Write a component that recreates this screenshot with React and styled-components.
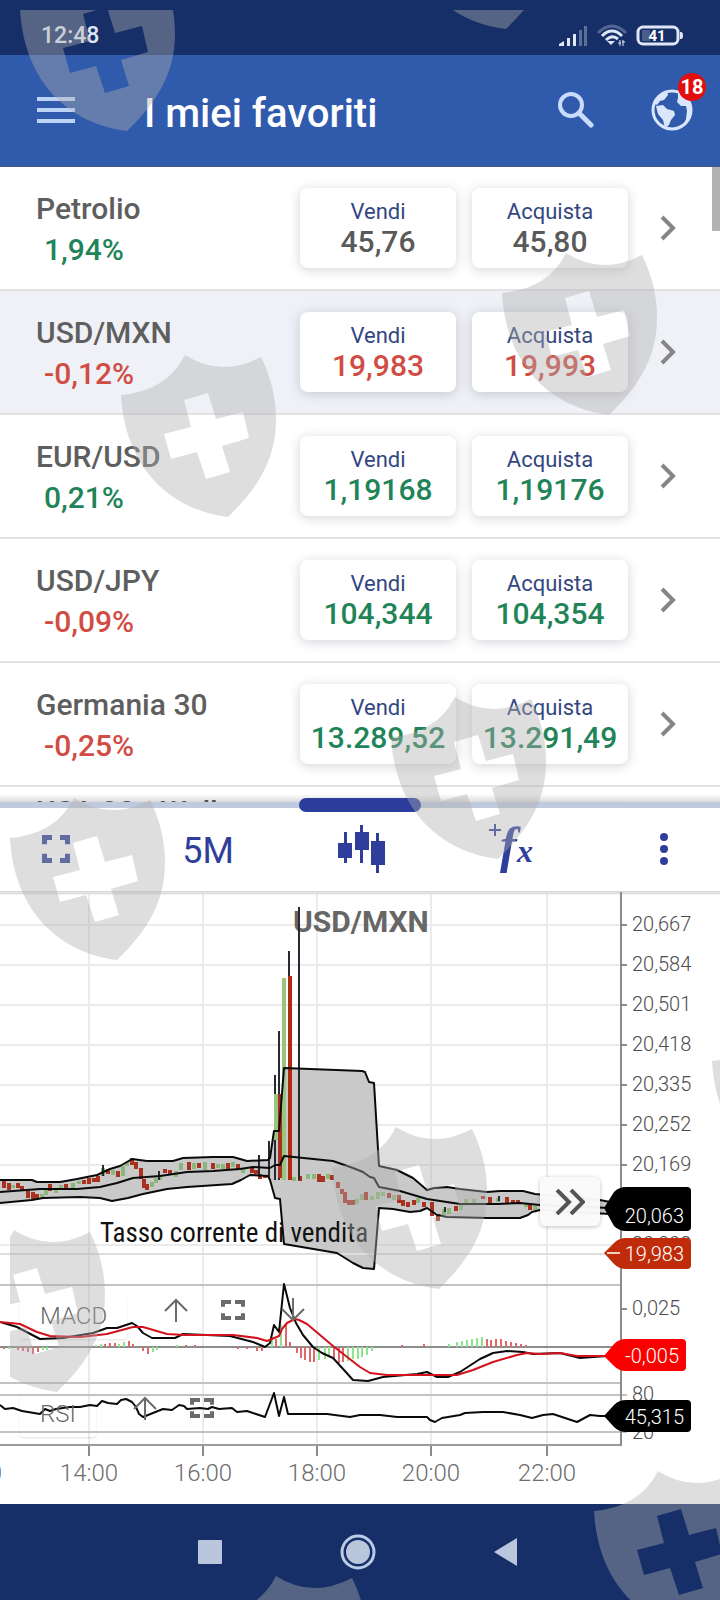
import styled, { createGlobalStyle } from "styled-components";

const GlobalStyle = createGlobalStyle`
  * {
    box-sizing: border-box;
  }

  body {
    margin: 0;
    background-color: #fff;
    font-family: Roboto, "Liberation Sans", sans-serif;
  }

  button {
    font-family: inherit;
    border: none;
    padding: 0;
    background: none;
    cursor: pointer;
  }

  svg {
    display: block;
  }
`

const quotes = [
  { name: "Petrolio", change: "1,94%", up: true, sell: "45,76", buy: "45,80", tone: "flat" },
  { name: "USD/MXN", change: "-0,12%", up: false, sell: "19,983", buy: "19,993", tone: "down", selected: true },
  { name: "EUR/USD", change: "0,21%", up: true, sell: "1,19168", buy: "1,19176", tone: "up" },
  { name: "USD/JPY", change: "-0,09%", up: false, sell: "104,344", buy: "104,354", tone: "up" },
  { name: "Germania 30", change: "-0,25%", up: false, sell: "13.289,52", buy: "13.291,49", tone: "up" },
  { name: "USA 30 - Wall Street", change: "", up: true, sell: "", buy: "", tone: "flat" },
];

const tones = {
  flat: "#5a5a5a",
  up: "#1f8458",
  down: "#d04c44",
};

const Page = styled.div`
  position: relative;
  min-height: 100vh;
  display: flex;
  flex-direction: column;
  overflow: hidden;
`

const StatusBar = styled.div`
  display: flex;
  align-items: center;
  height: 55px;
  padding: 16px 37px 0 41px;
  background-color: #172f68;
  color: #dfe6f6;

  time {
    flex: 1;
    font-size: 23px;
    font-weight: 500;
    line-height: 24px;
  }
`

const StatusIcons = styled.div`
  display: flex;
  align-items: center;
  gap: 9px;
`

const Header = styled.header`
  display: flex;
  align-items: center;
  height: 112px;
  padding: 0 27px 0 37px;
  background-color: #305bac;
  border-bottom: 2px solid #3a5a94;

  h1 {
    flex: 1;
    margin: 0 0 0 68px;
    padding-top: 8px;
    color: #fff;
    font-size: 40px;
    font-weight: 500;
    line-height: 44px;
  }
`

const HeaderButton = styled.button`
  position: relative;
  color: #cfdffa;
  margin-left: ${(props) => props.$gap || 0}px;
`

const Badge = styled.span`
  position: absolute;
  top: -16px;
  right: -13px;
  width: 28px;
  height: 28px;
  border-radius: 50%;
  background-color: #e20d0d;
  color: #fff;
  font-size: 20px;
  font-weight: 700;
  line-height: 29px;
  text-align: center;
`

const List = styled.main`
  position: relative;
  height: 635px;
  overflow: hidden;

  &::after {
    content: "";
    position: absolute;
    left: 0;
    right: 0;
    bottom: 0;
    height: 8px;
    background: linear-gradient(rgba(0, 0, 0, 0), rgba(0, 0, 0, 0.14));
  }
`

const ScrollThumb = styled.div`
  position: absolute;
  top: 0;
  right: 0;
  width: 8px;
  height: 64px;
  background-color: #b3b3b3;
`

const Row = styled.div`
  display: flex;
  align-items: center;
  gap: 16px;
  height: 124px;
  padding: 0 44px 0 36px;
  border-bottom: 2px solid #e2e2e4;
  background-color: ${(props) => (props.$selected ? "#eff1f7" : "#fff")};
`

const Instrument = styled.div`
  flex: 1;
  max-width: 248px;
  margin-right: auto;
  padding-top: 2px;
`

const Name = styled.h2`
  width: 200px;
  margin: 0;
  color: #5e5e5e;
  font-size: 30px;
  font-weight: 500;
  line-height: 41px;
`

const Change = styled.p`
  margin: 0 0 0 8px;
  min-height: 34px;
  color: ${(props) => (props.$up ? "#1f8458" : "#d04c44")};
  font-size: 30px;
  font-weight: 500;
  line-height: 41px;
`

const PriceButton = styled.button`
  display: flex;
  flex-direction: column;
  align-items: center;
  justify-content: center;
  width: 156px;
  height: 80px;
  padding-top: 2px;
  border-radius: 8px;
  background-color: #fff;
  box-shadow: 0 2px 12px rgba(60, 50, 80, 0.22);
  color: #34467f;
  font-size: 22px;
  line-height: 26px;

  strong {
    color: ${(props) => tones[props.$tone]};
    font-size: 30px;
    font-weight: 500;
    line-height: 34px;
  }
`

const DetailsButton = styled.button`
  width: 16px;
  margin-left: 16px;
`

const Divider = styled.div`
  position: relative;
  height: 6px;
  background-color: #bfcadf;
`

const Handle = styled.div`
  position: absolute;
  top: -4px;
  left: 50%;
  width: 122px;
  height: 14px;
  margin-left: -61px;
  border-radius: 7px;
  background-color: #2d3d9c;
`

const Toolbar = styled.div`
  display: flex;
  align-items: center;
  justify-content: space-between;
  height: 84px;
  padding: 0 26px 2px 26px;
  border-bottom: 1px solid #dadada;
  color: #2f3d9b;
`

const ToolButton = styled.button`
  display: flex;
  align-items: center;
  justify-content: center;
  width: 60px;
  color: inherit;
`

const PeriodButton = styled(ToolButton)`
  padding-top: 4px;
  font-size: 36px;
  line-height: 40px;
`

const ChartArea = styled.section`
  position: relative;
  flex: 1;

  & > svg {
    width: 100%;
    height: auto;
  }
`

const OverlayButton = styled.button`
  position: absolute;
  top: ${(props) => props.$top}px;
  left: ${(props) => props.$left}px;
  color: #6b6b6b;
`

const NextButton = styled(OverlayButton)`
  display: flex;
  align-items: center;
  justify-content: center;
  width: 60px;
  height: 49px;
  border-radius: 6px;
  background-color: rgba(250, 250, 250, 0.97);
  box-shadow: 0 1px 4px rgba(0, 0, 0, 0.25);
  color: #555;
`

const IndicatorLabel = styled.div`
  position: absolute;
  top: ${(props) => props.$top}px;
  left: 20px;
  height: 42px;
  padding: 0 20px;
  border-radius: 3px;
  box-shadow: 0 1px 2px rgba(0, 0, 0, 0.12);
  color: #6a6a6a;
  font-size: 24px;
  font-weight: 300;
  line-height: 38px;
`

const NavBar = styled.nav`
  display: flex;
  align-items: center;
  justify-content: space-between;
  height: 96px;
  padding: 0 202px 0 198px;
  background-color: #172f68;
`

const ShieldLayer = styled.div`
  position: absolute;
  inset: 10px 0 0 10px;
  overflow: hidden;
  pointer-events: none;

  svg {
    width: 100%;
    height: 100%;
  }
`

const shields = [
  [10, -41], [389, -143], [111, 345], [492, 243], [381, 687], [0, 788],
  [322, 1117], [-60, 1220], [702, 1011], [584, 1461], [202, 1566],
];

function Shields() {
  return (
    <ShieldLayer aria-hidden="true">
      <svg>
        {shields.map(([x, y]) => (
          <path
            key={`${x}-${y}`}
            transform={`translate(${x} ${y})`}
            fill="rgb(175,175,175)"
            fillOpacity="0.41"
            fillRule="evenodd"
            d="M64 0Q100 23 140 2Q155 32 155 65C155 105 136 134 107 162C50 155 4 114 0 40Q46 36 64 0ZM63 45L87 38L95 64L122 57L128 83L101 91L109 117L85 124L76 97L50 104L43 79L70 72Z"
          />
        ))}
      </svg>
    </ShieldLayer>
  )
}

function CornersIcon({ width = 28, height = 28, stroke = 5 }) {
  const s = stroke / 2;
  const r = width - s;
  const b = height - s;
  const l = 10;
  const h = height / 3;

  return (
    <svg width={width} height={height} fill="none" stroke="currentColor" strokeWidth={stroke}>
      <path d={`M${l} ${s}H${s}V${h}M${width - l} ${s}H${r}V${h}M${l} ${b}H${s}V${height - h}M${width - l} ${b}H${r}V${height - h}`} />
    </svg>
  )
}

function ArrowIcon({ down }) {
  return (
    <svg width="24" height="24" fill="none" stroke="currentColor" strokeWidth="2">
      <path d={down ? "M12 0V22M1 11L12 22L23 11" : "M12 24V2M1 13L12 2L23 13"} />
    </svg>
  )
}

function Quote({ quote }) {
  return (
    <Row $selected={quote.selected}>
      <Instrument>
        <Name>{quote.name}</Name>
        <Change $up={quote.up}>{quote.change}</Change>
      </Instrument>
      <PriceButton $tone={quote.tone}>
        Vendi
        <strong>{quote.sell}</strong>
      </PriceButton>
      <PriceButton $tone={quote.tone}>
        Acquista
        <strong>{quote.buy}</strong>
      </PriceButton>
      <DetailsButton aria-label="Dettagli">
        <svg width="16" height="26" fill="none" stroke="#858585" strokeWidth="4">
          <path d="M2 2L13 13L2 24" />
        </svg>
      </DetailsButton>
    </Row>
  )
}

const upper = "0,1180 32,1180 37,1182 60,1182 77,1179 97,1175 110,1169 120,1166 132,1159 147,1161 173,1161 183,1158 213,1157 233,1157 247,1161 268,1160 270,1158 274,1131 279,1131 284,1068 362,1071 365,1072 369,1082 374,1083 379,1166 397,1170 413,1178 427,1190 434,1188 447,1187 460,1189 487,1192 500,1191 523,1191 535,1194 600,1200 610,1202";
const middle = "0,1192 40,1189 77,1189 100,1187 117,1183 133,1178 160,1176 187,1172 213,1171 240,1169 253,1167 270,1168 275,1165 280,1165 284,1156 333,1161 353,1168 363,1172 370,1177 374,1178 379,1187 400,1191 427,1199 460,1204 497,1204 520,1203 540,1205 610,1208";
const lower = "0,1203 32,1200 43,1198 80,1197 100,1198 112,1201 128,1198 143,1194 167,1189 187,1187 232,1184 241,1180 250,1175 268,1176 270,1180 275,1198 280,1199 284,1244 337,1253 353,1263 363,1268 374,1269 379,1208 393,1209 410,1212 420,1211 427,1208 437,1215 447,1217 487,1218 520,1218 528,1215 532,1212 540,1210 610,1214";
const band = `${upper} ${lower.split(" ").reverse().join(" ")}`;

const macd = "0,1322 17,1327 40,1339 63,1338 93,1333 107,1328 117,1328 132,1323 137,1326 143,1333 152,1338 175,1338 183,1334 230,1336 253,1342 265,1347 270,1343 274,1325 279,1332 284,1284 290,1308 296,1323 303,1335 313,1347 322,1353 333,1358 344,1370 353,1380 368,1381 383,1377 417,1374 427,1372 437,1377 448,1377 460,1372 480,1359 493,1353 507,1351 523,1352 533,1354 560,1353 580,1358 607,1356";
const signal = "0,1322 20,1324 37,1332 50,1336 80,1337 107,1334 133,1327 143,1327 167,1334 185,1335 233,1335 257,1338 267,1341 279,1336 282,1329 287,1323 295,1319 299,1320 307,1324 333,1346 360,1367 370,1373 387,1375 457,1375 473,1370 493,1362 517,1355 527,1353 540,1354 560,1353 577,1356 607,1356";
const rsi = "0,1405 5,1409 13,1408 22,1411 40,1414 45,1409 50,1411 56,1409 70,1407 80,1407 90,1405 97,1406 102,1401 108,1403 117,1404 121,1400 126,1399 132,1402 136,1407 139,1414 143,1417 153,1413 163,1409 172,1410 179,1405 184,1406 187,1409 200,1408 208,1409 212,1407 219,1409 232,1408 237,1412 247,1411 256,1414 265,1417 274,1393 279,1416 284,1397 288,1414 327,1414 350,1417 360,1415 380,1415 397,1417 427,1417 430,1420 435,1422 442,1418 460,1415 465,1413 483,1412 503,1412 520,1415 532,1418 543,1415 553,1414 562,1417 577,1422 590,1415 600,1416 607,1416";

// x, top, bottom, r = red / g = green
const candles = [
  [4, 1181, 1188, "r"], [9, 1183, 1190, "r"], [13, 1185, 1188, "g"], [18, 1183, 1188, "r"], [22, 1186, 1190, "r"],
  [28, 1191, 1198, "r"], [33, 1192, 1199, "r"], [37, 1194, 1200, "r"], [42, 1194, 1197, "g"], [46, 1190, 1195, "g"],
  [50, 1184, 1191, "r"], [56, 1188, 1193, "g"], [61, 1185, 1190, "g"], [66, 1184, 1188, "r"], [73, 1183, 1189, "g"],
  [79, 1181, 1184, "g"], [84, 1180, 1184, "r"], [89, 1178, 1184, "r"], [94, 1178, 1182, "r"], [98, 1176, 1182, "r"],
  [103, 1168, 1176, "g"], [108, 1169, 1174, "r"], [113, 1170, 1175, "g"], [118, 1171, 1177, "r"], [123, 1166, 1176, "g"],
  [127, 1162, 1166, "g"], [132, 1158, 1165, "r"], [136, 1162, 1169, "r"], [141, 1168, 1179, "r"], [144, 1179, 1188, "r"],
  [147, 1184, 1190, "r"], [152, 1182, 1187, "g"], [156, 1178, 1183, "g"], [160, 1175, 1180, "g"], [165, 1169, 1173, "r"],
  [170, 1170, 1174, "r"], [176, 1171, 1177, "g"], [181, 1163, 1170, "g"], [189, 1162, 1170, "r"], [194, 1163, 1169, "g"],
  [199, 1163, 1168, "r"], [205, 1162, 1170, "g"], [213, 1163, 1169, "r"], [218, 1164, 1168, "g"], [223, 1164, 1169, "g"],
  [228, 1163, 1169, "r"], [233, 1162, 1167, "g"], [238, 1164, 1170, "r"], [243, 1169, 1173, "g"], [252, 1167, 1173, "r"],
  [256, 1170, 1174, "r"], [260, 1174, 1179, "r"], [265, 1175, 1178, "r"], [294, 1177, 1181, "g"], [300, 1176, 1181, "r"],
  [308, 1174, 1179, "g"], [314, 1174, 1179, "g"], [319, 1174, 1182, "r"], [323, 1176, 1182, "r"], [328, 1174, 1179, "g"],
  [332, 1175, 1180, "r"], [338, 1182, 1188, "r"], [342, 1189, 1194, "r"], [345, 1192, 1203, "r"], [349, 1200, 1205, "r"],
  [353, 1200, 1205, "r"], [357, 1199, 1204, "g"], [362, 1194, 1200, "g"], [366, 1192, 1200, "r"], [372, 1196, 1200, "g"],
  [378, 1192, 1199, "g"], [383, 1192, 1196, "g"], [389, 1193, 1198, "r"], [394, 1195, 1200, "g"], [399, 1195, 1203, "r"],
  [403, 1200, 1206, "r"], [408, 1202, 1207, "r"], [414, 1200, 1205, "r"], [418, 1198, 1203, "g"], [424, 1202, 1207, "r"],
  [432, 1202, 1216, "r"], [438, 1214, 1221, "r"], [444, 1209, 1215, "g"], [449, 1208, 1214, "g"], [456, 1206, 1211, "r"],
  [461, 1204, 1210, "g"], [466, 1199, 1204, "g"], [474, 1199, 1204, "g"], [483, 1196, 1199, "r"], [490, 1197, 1204, "r"],
  [498, 1198, 1202, "g"], [507, 1197, 1204, "r"], [513, 1200, 1204, "r"], [518, 1200, 1204, "r"], [526, 1204, 1207, "g"],
  [530, 1205, 1210, "r"], [535, 1206, 1210, "g"],
];

const bars = [
  [4, 1349, "r"], [9, 1349, "g"], [18, 1350, "r"], [23, 1351, "r"], [28, 1352, "r"], [33, 1354, "r"], [38, 1352, "r"],
  [43, 1350, "g"], [47, 1350, "g"], [96, 1345, "g"], [101, 1344, "g"], [105, 1344, "r"], [110, 1343, "r"], [115, 1343, "r"],
  [119, 1344, "g"], [124, 1342, "g"], [129, 1341, "r"], [133, 1344, "r"], [143, 1351, "r"], [148, 1354, "r"],
  [153, 1352, "g"], [157, 1350, "g"], [177, 1345, "g"], [186, 1345, "r"], [195, 1345, "r"], [238, 1349, "r"], [247, 1349, "r"],
  [257, 1351, "r"], [262, 1351, "r"], [272, 1337, "g"], [276, 1339, "r"], [281, 1325, "g"], [286, 1324, "r"], [290, 1342, "r"],
  [297, 1353, "r"], [301, 1358, "r"], [305, 1360, "r"], [310, 1362, "r"], [314, 1362, "r"], [319, 1360, "g"], [325, 1359, "g"],
  [329, 1357, "g"], [334, 1360, "r"], [339, 1363, "r"], [343, 1362, "r"], [348, 1361, "g"], [353, 1359, "g"], [358, 1359, "g"],
  [362, 1357, "g"], [367, 1355, "g"], [372, 1351, "g"], [402, 1345, "r"], [424, 1344, "r"], [449, 1344, "g"], [457, 1342, "g"],
  [462, 1341, "g"], [467, 1340, "g"], [472, 1339, "g"], [477, 1338, "g"], [482, 1337, "g"], [487, 1339, "r"], [491, 1340, "r"],
  [496, 1339, "r"], [501, 1339, "r"], [506, 1341, "r"], [511, 1342, "r"], [516, 1343, "r"], [521, 1344, "r"], [526, 1345, "r"],
];

const wicks = [
  [103, 1165, 1176], [159, 1171, 1180], [259, 1155, 1176], [269, 1141, 1178], [275, 1075, 1180],
  [279, 1031, 1180], [289, 951, 978], [299, 907, 1180], [445, 1207, 1212], [499, 1196, 1201],
];

const prices = ["20,667", "20,584", "20,501", "20,418", "20,335", "20,252", "20,169", "20,086", "20,003"];
const hours = [[-27, "12:00"], [89, "14:00"], [203, "16:00"], [317, "18:00"], [431, "20:00"], [547, "22:00"]];

function Tag({ top, bottom, right, fill, tip, baseline, children }) {
  const end = right - 7;

  return (
    <>
      <path
        fill={fill}
        d={`M604 ${tip}L614 ${top + 5}Q619 ${top} 626 ${top}H${right - 4}Q${right} ${top} ${right} ${top + 4}V${bottom - 4}Q${right} ${bottom} ${right - 4} ${bottom}H626Q619 ${bottom} 614 ${bottom - 5}Z`}
      />
      <text x={end} y={baseline} textAnchor="end" fontSize="20" fill="#fff">{children}</text>
    </>
  )
}

function Chart() {
  return (
    <svg viewBox="0 892 720 612" fontFamily="Roboto, sans-serif" fontWeight="300">
      <g stroke="#ebebeb" strokeWidth="2">
        {prices.map((price, i) => <line key={price} x1="0" x2="621" y1={925 + i * 40} y2={925 + i * 40} />)}
        {hours.map(([x]) => <line key={x} x1={x} x2={x} y1="892" y2="1445" />)}
      </g>
      <path d="M0 893H720" stroke="#e2e2e2" strokeWidth="3" />

      <polygon points={band} fill="#c9c9c9" />
      {candles.map(([x, top, bottom, tone]) => (
        <rect key={x} x={x - 2} y={top} width="4" height={bottom - top} fill={tone === "r" ? "#a8321f" : "#8bb87a"} />
      ))}
      <g stroke="#262a33" strokeWidth="2">
        {wicks.map(([x, y1, y2]) => <line key={x} x1={x} x2={x} y1={y1} y2={y2} />)}
      </g>
      <rect x="274" y="1094" width="4" height="46" fill="#9bc47f" />
      <rect x="278" y="1094" width="4" height="84" fill="#a8321f" />
      <rect x="282" y="978" width="4" height="202" fill="#9bc47f" />
      <rect x="288" y="976" width="4" height="204" fill="#b02c10" />
      <path d="M0 1254H621" stroke="#dedede" strokeWidth="2" />
      <g fill="none" stroke="#0a0a0a" strokeWidth="2" strokeLinejoin="round">
        <polyline points={upper} />
        <polyline points={middle} />
        <polyline points={lower} />
      </g>

      <text x="293" y="932" fontSize="30" fontWeight="700" fill="#666">USD/MXN</text>
      <path d="M299 907V940" stroke="#262a33" strokeWidth="2" />
      <text x="100" y="1242" fontSize="27" fontWeight="400" fill="#111" fontFamily="'Roboto Condensed', 'Liberation Sans Narrow', Roboto, sans-serif">
        Tasso corrente di vendita
      </text>

      <path d="M0 1285H621M0 1383H621M0 1395H627M0 1432H627" stroke="#c2c2c2" strokeWidth="2" />
      <path d="M0 1347H621" stroke="#8b8f8b" strokeWidth="2" />
      {bars.map(([x, y, tone]) => (
        <line key={x} x1={x} x2={x} y1="1347" y2={y} stroke={tone === "r" ? "#e0686a" : "#8fe38c"} strokeWidth="2" />
      ))}
      <g fill="none" strokeWidth="2" strokeLinejoin="round">
        <polyline points={macd} stroke="#0a0a0a" />
        <polyline points={signal} stroke="#d3121e" />
        <polyline points={rsi} stroke="#0a0a0a" />
      </g>

      <path d="M0 1445H622" stroke="#9a9a9a" strokeWidth="2" />
      <path d="M621 892V1445" stroke="#8c8c8c" strokeWidth="2" />
      <g stroke="#8c8c8c" strokeWidth="2">
        {prices.map((price, i) => <line key={price} x1="621" x2="627" y1={925 + i * 40} y2={925 + i * 40} />)}
        <path d="M621 1309H627" />
      </g>
      <g fontSize="20" fill="#4c4c4c">
        {prices.map((price, i) => <text key={price} x="632" y={931 + i * 40}>{price}</text>)}
        <text x="632" y="1315">0,025</text>
        <text x="632" y="1401">80</text>
        <text x="632" y="1439">20</text>
      </g>
      <g fontSize="24" fill="#6d6d6d" textAnchor="middle">
        {hours.map(([x, label]) => (
          <g key={label}>
            <path d={`M${x} 1446V1456`} stroke="#8c8c8c" strokeWidth="2" />
            <text x={x} y="1481">{label}</text>
          </g>
        ))}
      </g>

      <Tag top={1187} bottom={1231} tip={1208} right={691} fill="#000" baseline={1223}>20,063</Tag>
      <Tag top={1238} bottom={1269} tip={1253} right={691} fill="#c02c0a" baseline={1261}>19,983</Tag>
      <path d="M607 1253H620" stroke="#f3cfc6" strokeWidth="2" />
      <Tag top={1339} bottom={1371} tip={1356} right={686} fill="#fc0000" baseline={1363}>-0,005</Tag>
      <Tag top={1400} bottom={1432} tip={1416} right={691} fill="#000" baseline={1424}>45,315</Tag>
    </svg>
  )
}

function App() {
  return (
    <Page>
      <GlobalStyle />
      <StatusBar>
        <time>12:48</time>
        <StatusIcons>
          <svg width="29" height="20" fill="#dfe6f6">
            <path d="M0 20V18L5 15V20ZM8 12H11V20H8ZM14 8H17V20H14Z" />
            <path d="M20 4H23V20H20ZM25 0H28V20H25Z" opacity="0.35" />
          </svg>
          <svg width="30" height="23" fill="none" stroke="#dfe6f6" strokeWidth="3">
            <path d="M1 9Q15 -5 29 9" opacity="0.3" />
            <path d="M5 12Q15 2 25 12M9 16Q15 10 21 15" />
            <path d="M10 17L14 21L18 17Z" fill="#dfe6f6" stroke="none" />
            <path d="M23 16V22M26 16V22M21 19H24M25 18H28" strokeWidth="1" />
          </svg>
          <svg width="47" height="22">
            <rect x="2" y="2" width="40" height="17" rx="5" fill="none" stroke="#dfe6f6" strokeWidth="3" />
            <rect x="6" y="5" width="8" height="11" fill="#4a5c88" />
            <path d="M44 7H45Q47 7 47 10.500Q47 14 45 14H44Z" fill="#dfe6f6" />
            <text x="21" y="16" fontSize="15" fontWeight="700" fill="#fff" textAnchor="middle">41</text>
          </svg>
        </StatusIcons>
      </StatusBar>

      <Header>
        <HeaderButton aria-label="Menu">
          <svg width="39" height="28" stroke="#bdd3f6" strokeWidth="4">
            <path d="M0 3H38M0 14H38M0 25H38" />
          </svg>
        </HeaderButton>
        <h1>I miei favoriti</h1>
        <HeaderButton aria-label="Cerca">
          <svg width="36" height="36" fill="none" stroke="#c9dcfb" strokeWidth="4">
            <circle cx="13" cy="13" r="11" />
            <path d="M21 21L33 33" strokeWidth="5" strokeLinecap="round" />
          </svg>
        </HeaderButton>
        <HeaderButton aria-label="Mercati" $gap={57}>
          <svg width="42" height="42">
            <circle cx="21" cy="21" r="19" fill="none" stroke="#d9e6fb" strokeWidth="3" />
            <path d="M3 14C6 7 10 3 16 2L17 6L13 11L9 12L6 16ZM5 17L12 16L16 20L23 22L24 26L20 31L18 36L14 39L12 31L7 25ZM27 4C34 6 39 13 40 19C40 26 37 33 32 37L35 30L36 22L35 17L30 17L26 13L27 9Z" fill="#d9e6fb" />
          </svg>
          <Badge>18</Badge>
        </HeaderButton>
      </Header>

      <List>
        {quotes.map((quote) => <Quote key={quote.name} quote={quote} />)}
        <ScrollThumb />
      </List>

      <Divider>
        <Handle />
      </Divider>

      <Toolbar>
        <ToolButton aria-label="Schermo intero"><CornersIcon /></ToolButton>
        <PeriodButton>5M</PeriodButton>
        <ToolButton aria-label="Candele">
          <svg width="52" height="48" viewBox="-4 0 52 48" fill="currentColor">
            <path d="M6 7H9V18H14V33H9V38H6V33H0V18H6ZM22 0H25V7H31V25H25V38H22V25H17V7H22ZM38 8H41V16H47V40H41V48H38V40H33V16H38Z" />
          </svg>
        </ToolButton>
        <ToolButton aria-label="Indicatori">
          <svg width="46" height="56" fill="currentColor">
            <path d="M0 9H12M6 3V15" stroke="currentColor" strokeWidth="2" />
            <text x="11" y="41" fontFamily="Liberation Serif, serif" fontStyle="italic" fontWeight="700" fontSize="50">f</text>
            <text x="28" y="41" fontFamily="Liberation Serif, serif" fontStyle="italic" fontWeight="700" fontSize="32">x</text>
          </svg>
        </ToolButton>
        <ToolButton aria-label="Altro">
          <svg width="12" height="36" fill="currentColor">
            <circle cx="6" cy="6" r="4" />
            <circle cx="6" cy="18" r="4" />
            <circle cx="6" cy="30" r="4" />
          </svg>
        </ToolButton>
      </Toolbar>

      <ChartArea>
        <Chart />
        <IndicatorLabel $top={405}>MACD</IndicatorLabel>
        <OverlayButton $top={406} $left={164} aria-label="Sposta MACD su"><ArrowIcon /></OverlayButton>
        <OverlayButton $top={408} $left={221} aria-label="Espandi MACD">
          <CornersIcon width={24} height={20} stroke={4} />
        </OverlayButton>
        <OverlayButton $top={406} $left={281} aria-label="Sposta MACD giù"><ArrowIcon down /></OverlayButton>
        <IndicatorLabel $top={503}>RSI</IndicatorLabel>
        <OverlayButton $top={504} $left={133} aria-label="Sposta RSI su"><ArrowIcon /></OverlayButton>
        <OverlayButton $top={506} $left={190} aria-label="Espandi RSI">
          <CornersIcon width={24} height={20} stroke={4} />
        </OverlayButton>
        <NextButton $top={285} $left={540} aria-label="Vai alla fine">
          <svg width="30" height="26" fill="none" stroke="currentColor" strokeWidth="4">
            <path d="M2 1L14 13L2 25M16 1L28 13L16 25" />
          </svg>
        </NextButton>
      </ChartArea>

      <NavBar>
        <button aria-label="Recenti">
          <svg width="24" height="24" fill="#b9c6dc"><rect width="24" height="24" rx="1" /></svg>
        </button>
        <button aria-label="Home">
          <svg width="36" height="36">
            <circle cx="18" cy="18" r="16" fill="none" stroke="#bccbe6" strokeWidth="3" />
            <circle cx="18" cy="18" r="12" fill="#b9c6dc" />
          </svg>
        </button>
        <button aria-label="Indietro">
          <svg width="24" height="28" fill="#b9c6dc"><path d="M0 14L23 0V28Z" /></svg>
        </button>
      </NavBar>
      <Shields />
    </Page>
  )
}

export default App;
